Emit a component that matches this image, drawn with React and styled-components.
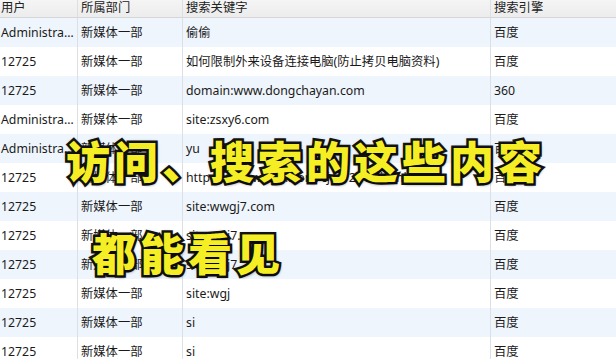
import React from 'react';
import styled, { createGlobalStyle } from 'styled-components';

const GlobalStyle = createGlobalStyle`
  html, body {
    margin: 0;
    padding: 0;
    background: #ffffff;
    overflow: hidden;
  }
`;

const Screen = styled.div`
  position: relative;
  width: 616px;
  height: 359px;
  overflow: hidden;
  background: #ffffff;
  font-family: "Noto Sans", "Noto Sans CJK SC", sans-serif;
  font-size: 12.3px;
  color: #1a1a1a;
`;

const Grid = styled.div`
  display: grid;
  grid-template-columns: 78px 105px 308px 1fr;
`;

const HeadCell = styled.div`
  height: 17px;
  line-height: 16px;
  padding-left: ${p => p.$pad}px;
  background: linear-gradient(#f5f5f5, #ececec);
  border-bottom: 1px solid #d6d6d6;
  border-right: ${p => (p.$last ? 'none' : '1px solid #dcdfe3')};
  white-space: nowrap;
  overflow: hidden;
  color: #222;
`;

const Cell = styled.div`
  height: 29px;
  line-height: 29px;
  padding-left: ${p => p.$pad}px;
  padding-right: 2px;
  background: ${p => (p.$odd ? '#eff5fc' : '#ffffff')};
  border-right: ${p => (p.$last ? 'none' : '1px solid #dcdfe3')};
  white-space: nowrap;
  overflow: hidden;
  text-overflow: ${p => (p.$clip ? 'ellipsis' : 'clip')};
`;

const Overlay = styled.div`
  position: absolute;
  inset: 0;
  pointer-events: none;
`;

const Caption = styled.div`
  position: absolute;
  left: ${p => p.$x}px;
  top: ${p => p.$y}px;
  font-family: "Noto Sans CJK SC", sans-serif;
  font-weight: 800;
  font-size: 44px;
  letter-spacing: 4px;
  line-height: 1;
  white-space: nowrap;
  color: #f6ee24;
  -webkit-text-stroke: 5px #151515;
  paint-order: stroke fill;
  text-shadow: 0 0 4px rgba(0, 0, 0, 0.5), 1px 2px 3px rgba(0, 0, 0, 0.45);
`;

const headers = [
  { label: '用户', pad: 1 },
  { label: '所属部门', pad: 3 },
  { label: '搜索关键字', pad: 3 },
  { label: '搜索引擎', pad: 3 },
];

const admin = 'Administrator';
const rows = [
  [admin, '新媒体一部', '偷偷', '百度'],
  ['12725', '新媒体一部', '如何限制外来设备连接电脑(防止拷贝电脑资料)', '百度'],
  ['12725', '新媒体一部', 'domain:www.dongchayan.com', '360'],
  [admin, '新媒体一部', 'site:zsxy6.com', '百度'],
  [admin, '新媒体一部', 'yu', '百度'],
  ['12725', '新媒体一部', 'https://www.wgjn.com/cjwt/2113.html', '百度'],
  ['12725', '新媒体一部', 'site:wwgj7.com', '百度'],
  ['12725', '新媒体一部', 'site:wgj7.com', '百度'],
  ['12725', '新媒体一部', 'site:wgj7', '百度'],
  ['12725', '新媒体一部', 'site:wgj', '百度'],
  ['12725', '新媒体一部', 'si', '百度'],
  ['12725', '新媒体一部', 'si', '百度'],
];

export default function App() {
  return (
    <>
      <GlobalStyle />
      <Screen>
        <Grid>
          {headers.map((h, i) => (
            <HeadCell key={h.label} $pad={h.pad} $last={i === headers.length - 1}>
              {h.label}
            </HeadCell>
          ))}
          {rows.map((row, r) =>
            row.map((text, c) => (
              <Cell
                key={`${r}-${c}`}
                $pad={c === 0 ? 1 : 3}
                $odd={r % 2 === 0}
                $last={c === row.length - 1}
                $clip={c === 0}
              >
                {text}
              </Cell>
            ))
          )}
        </Grid>
        <Overlay>
          <Caption $x={66} $y={138}>访问、搜索的这些内容</Caption>
          <Caption $x={92} $y={230}>都能看见</Caption>
        </Overlay>
      </Screen>
    </>
  );
}
